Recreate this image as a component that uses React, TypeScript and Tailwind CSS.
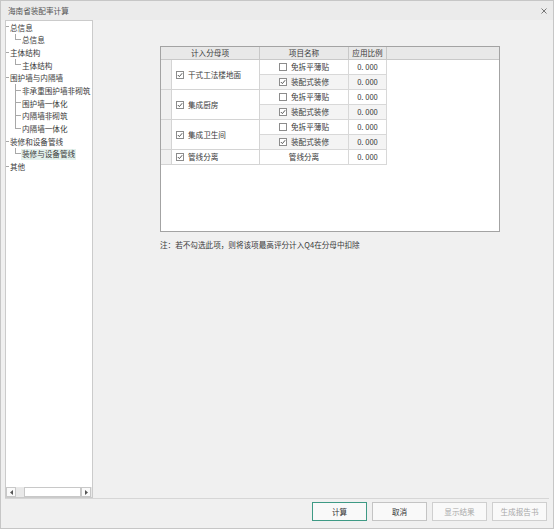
import React from "react";

const FONT = { fontFamily: '"Noto Sans CJK SC", "Noto Sans", sans-serif' };

function Check({ checked }: { checked: boolean }) {
  return (
    <span className="inline-flex w-[8px] h-[8px] border border-[#8c8c8c] bg-white items-center justify-center shrink-0">
      {checked && (
        <svg width="6" height="6" viewBox="0 0 6 6">
          <path d="M0.8 3 L2.4 4.6 L5.2 1.2" fill="none" stroke="#444" strokeWidth="0.9" />
        </svg>
      )}
    </span>
  );
}

type TreeItem = { label: string; level: 0 | 1; last?: boolean; selected?: boolean };

const tree: TreeItem[] = [
  { label: "总信息", level: 0 },
  { label: "总信息", level: 1, last: true },
  { label: "主体结构", level: 0 },
  { label: "主体结构", level: 1, last: true },
  { label: "围护墙与内隔墙", level: 0 },
  { label: "非承重围护墙非砌筑", level: 1 },
  { label: "围护墙一体化", level: 1 },
  { label: "内隔墙非砌筑", level: 1 },
  { label: "内隔墙一体化", level: 1, last: true },
  { label: "装修和设备管线", level: 0 },
  { label: "装修与设备管线", level: 1, last: true, selected: true },
  { label: "其他", level: 0 },
];

function TreeRow({ item }: { item: TreeItem }) {
  if (item.level === 0) {
    return (
      <div className="flex h-[12.7px] items-stretch ml-[-1px]">
        <span className="flex flex-col w-[4px]">
          <span className="h-1/2 border-b border-[#a8a8a8]" />
          <span className="h-1/2" />
        </span>
        <span className="flex items-center pl-[1px] text-[7.6px] leading-none text-[#3a3a3a] whitespace-nowrap">
          {item.label}
        </span>
      </div>
    );
  }
  return (
    <div className="flex h-[12.7px] items-stretch">
      <span className="w-[9px] shrink-0" />
      <span className="flex flex-col w-[6px] shrink-0">
        <span className="h-1/2 border-l border-b border-[#a8a8a8]" />
        <span className={item.last ? "h-1/2" : "h-1/2 border-l border-[#a8a8a8]"} />
      </span>
      <span
        className={
          "flex items-center my-[1px] px-[1px] text-[7.6px] leading-none text-[#3a3a3a] whitespace-nowrap " +
          (item.selected ? "bg-[#e3f1ec]" : "")
        }
      >
        {item.label}
      </span>
    </div>
  );
}

type Sub = { name: string; checked: boolean | null; shade: boolean };
type Group = { label: string; subs: Sub[] };

const groups: Group[] = [
  {
    label: "干式工法楼地面",
    subs: [
      { name: "免拆平薄贴", checked: false, shade: false },
      { name: "装配式装修", checked: true, shade: true },
    ],
  },
  {
    label: "集成厨房",
    subs: [
      { name: "免拆平薄贴", checked: false, shade: false },
      { name: "装配式装修", checked: true, shade: true },
    ],
  },
  {
    label: "集成卫生间",
    subs: [
      { name: "免拆平薄贴", checked: false, shade: false },
      { name: "装配式装修", checked: true, shade: true },
    ],
  },
  {
    label: "管线分离",
    subs: [{ name: "管线分离", checked: null, shade: false }],
  },
];

function Button({ label, primary, disabled }: { label: string; primary?: boolean; disabled?: boolean }) {
  return (
    <div
      className={
        "w-[55px] h-[19px] flex items-center justify-center text-[7.6px] leading-none bg-[#f9f9f9] " +
        (primary
          ? "border-[1.5px] border-[#3e9a85] text-[#333]"
          : disabled
          ? "border border-[#cfcfcf] text-[#a8a8a8]"
          : "border border-[#c4c4c4] text-[#333]")
      }
    >
      {label}
    </div>
  );
}

export default function App() {
  return (
    <div style={FONT} className="w-[554px] h-[529px] border border-[#c6c6c6] bg-[#f0f0f0] flex flex-col overflow-hidden">
      {/* title bar */}
      <div className="h-[19px] shrink-0 flex items-center justify-between bg-[#ebebeb] pl-[7px] pr-[6px]">
        <span className="text-[7.6px] leading-none text-[#555]">海南省装配率计算</span>
        <svg width="6" height="6" viewBox="0 0 6 6">
          <path d="M0.5 0.5 L5.5 5.5 M5.5 0.5 L0.5 5.5" stroke="#777" strokeWidth="1" />
        </svg>
      </div>

      {/* body */}
      <div className="flex-1 flex mx-[4px] border-b border-[#d6d6d6]">
        {/* tree panel */}
        <div className="w-[88px] shrink-0 border border-[#cbcbcb] bg-white flex flex-col">
          <div className="flex-1 overflow-hidden">
            {tree.map((t, i) => (
              <TreeRow key={i} item={t} />
            ))}
          </div>
          <div className="h-[10px] flex bg-[#e9e9e9]">
            <div className="w-[10px] border border-[#c8c8c8] bg-[#fafafa] flex items-center justify-center">
              <svg width="3" height="5" viewBox="0 0 3 5">
                <path d="M3 0 L0 2.5 L3 5 Z" fill="#555" />
              </svg>
            </div>
            <div className="w-[8px]" />
            <div className="w-[57px] border border-[#c8c8c8] bg-white" />
            <div className="w-[10px] border border-[#c8c8c8] bg-[#fafafa] flex items-center justify-center">
              <svg width="3" height="5" viewBox="0 0 3 5">
                <path d="M0 0 L3 2.5 L0 5 Z" fill="#555" />
              </svg>
            </div>
          </div>
        </div>

        {/* main */}
        <div className="flex-1 flex flex-col pl-[67px] pt-[26px]">
          <div className="w-[340px] h-[186px] border border-[#a3a3a3] bg-white flex flex-col">
            {/* header */}
            <div className="h-[13px] flex bg-[#e8e8e8] border-b border-[#c8c8c8] text-[7.6px] leading-none text-[#3a3a3a]">
              <div className="w-[99px] border-r border-[#c8c8c8] flex items-center justify-center">计入分母项</div>
              <div className="w-[89px] border-r border-[#c8c8c8] flex items-center justify-center">项目名称</div>
              <div className="w-[38px] border-r border-[#c8c8c8] flex items-center justify-center">应用比例</div>
              <div className="flex-1" />
            </div>
            {/* rows */}
            <div className="grid grid-cols-[11px_88px_89px_38px] auto-rows-[15px] w-[226px] text-[7.6px] leading-none text-[#3a3a3a]">
              {groups.map((g, gi) => {
                const span = g.subs.length === 2 ? "row-span-2" : "row-span-1";
                return (
                  <React.Fragment key={gi}>
                    <div className={"bg-[#f0f0f0] border-r border-b border-[#d4d4d4] " + span} />
                    <div className={"border-r border-b border-[#d4d4d4] flex items-center gap-[1px] pl-[4px] " + span}>
                      <Check checked={true} />
                      <span className="ml-[3px]">{g.label}</span>
                    </div>
                    {g.subs.map((s, si) => (
                      <React.Fragment key={si}>
                        <div
                          className={
                            "col-start-3 border-r border-b border-[#d8d8d8] flex items-center justify-center " +
                            (s.shade ? "bg-[#f4f4f4]" : "bg-white")
                          }
                        >
                          {s.checked !== null && <Check checked={s.checked} />}
                          <span className={s.checked !== null ? "ml-[4px]" : ""}>{s.name}</span>
                        </div>
                        <div
                          className={
                            "col-start-4 border-r border-b border-[#d8d8d8] flex items-center justify-center " +
                            (s.shade ? "bg-[#f4f4f4]" : "bg-white")
                          }
                        >
                          0. 000
                        </div>
                      </React.Fragment>
                    ))}
                  </React.Fragment>
                );
              })}
            </div>
          </div>
          <div className="mt-[9px] text-[7.6px] leading-none text-[#3a3a3a] whitespace-nowrap">
            注：若不勾选此项，则将该项最高评分计入Q4在分母中扣除
          </div>
        </div>
      </div>

      {/* bottom bar */}
      <div className="h-[29px] shrink-0 flex justify-end items-start pt-[3px] pr-[6px] gap-[5px]">
        <Button label="计算" primary />
        <Button label="取消" />
        <Button label="显示结果" disabled />
        <Button label="生成报告书" disabled />
      </div>
    </div>
  );
}
